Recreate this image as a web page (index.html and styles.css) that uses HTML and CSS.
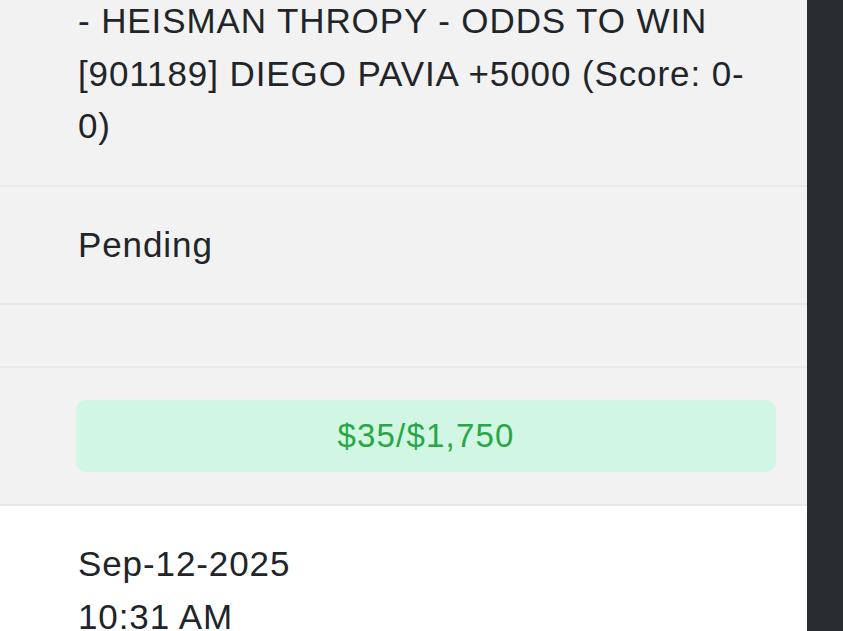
FILE: index.html
```html
<!DOCTYPE html>
<html lang="en">
<head>
<meta charset="utf-8">
<title>Bet detail</title>
<link rel="stylesheet" href="styles.css">
</head>
<body>
<div class="page">
  <main class="bets">
    <div class="row row-gray">
      <div class="cell-text">- HEISMAN THROPY - ODDS TO WIN [901189] DIEGO PAVIA +5000 (Score: 0-0)</div>
    </div>
    <div class="row row-gray">
      <div class="cell-text">Pending</div>
    </div>
    <div class="row row-gray row-empty"></div>
    <div class="row row-gray">
      <div class="amount">$35/$1,750</div>
    </div>
    <div class="row row-white">
      <div class="cell-text">Sep-12-2025<br>10:31 AM</div>
    </div>
  </main>
  <aside class="sidebar"></aside>
</div>
</body>
</html>
```
FILE: styles.css
```css
html, body {
  margin: 0;
  padding: 0;
  height: 100%;
  overflow: hidden;
}
body {
  font-family: "Liberation Sans", Arial, sans-serif;
  color: #212529;
  background: #ffffff;
}
.page {
  display: flex;
  height: 100%;
}
.bets {
  flex: 1;
  margin-top: -37px;
}
.sidebar {
  width: 36px;
  flex: none;
  background: #292d30;
}
.row {
  padding: 32px 31px 32px 76px;
  border-bottom: 2px solid #e8e8e8;
  font-size: 35px;
  line-height: 1.5;
}
.row-gray { background: #f2f2f2; }
.row-white { background: #ffffff; border-bottom: none; }
.row-empty { padding-top: 30px; padding-bottom: 31px; }
.cell-text {
  padding-left: 2px;
  letter-spacing: 0.9px;
}
.amount {
  background: #d1f6e3;
  color: #28a745;
  border-radius: 10px;
  text-align: center;
  font-size: 33px;
  line-height: 52px;
  padding: 10px 0;
  letter-spacing: 1.2px;
}
```
